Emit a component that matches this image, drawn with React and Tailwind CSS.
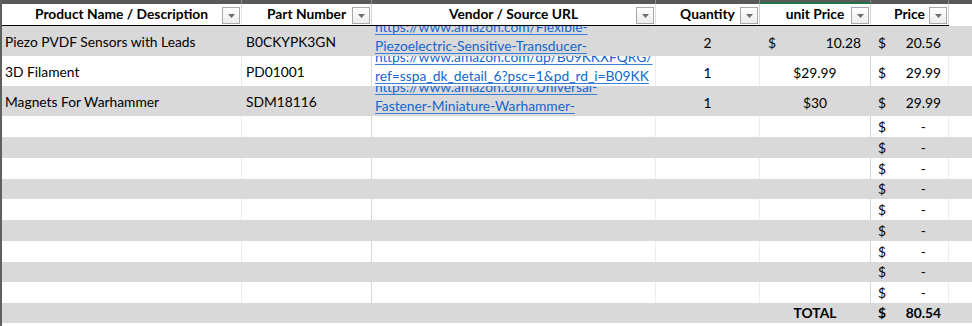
import React from 'react';

const COLS = [240, 130, 284, 104, 111, 78];

const items = [
    {
        name: 'Piezo PVDF Sensors with Leads',
        part: 'B0CKYPK3GN',
        url: ['https://www.amazon.com/Flexible-', 'Piezoelectric-Sensitive-Transducer-'],
        qty: 2,
        unit: { acct: '10.28' },
        price: '20.56',
    },
    {
        name: '3D Filament',
        part: 'PD01001',
        url: ['https://www.amazon.com/dp/B09KKXFQRG/', 'ref=sspa_dk_detail_6?psc=1&pd_rd_i=B09KK'],
        qty: 1,
        unit: { text: '$29.99' },
        price: '29.99',
    },
    {
        name: 'Magnets For Warhammer',
        part: 'SDM18116',
        url: ['https://www.amazon.com/Universal-', 'Fastener-Miniature-Warhammer-'],
        qty: 1,
        unit: { text: '$30' },
        price: '29.99',
    },
];

// 9 blank rows, alternating white / grey, heights as in the sheet
const blanks = [21, 21, 21, 20, 21, 21, 21, 20, 21];

const FilterButton = () => (
    <span className="absolute right-[1px] bottom-[1px] w-[18px] h-[17px] border border-[#a9a9a9] bg-gradient-to-b from-white to-[#ececec] flex items-center justify-center">
        <svg width="7" height="4" viewBox="0 0 7 4">
            <path d="M0 0 L7 0 L3.5 4 Z" fill="#6d6d6d" />
        </svg>
    </span>
);

const Header = () => {
    const labels = ['Product Name / Description', 'Part Number', 'Vendor / Source URL', 'Quantity', 'unit Price', 'Price'];
    const seps = ['border-[#e3e3e3]', 'border-[#d4d4d4]', 'border-[#e3e3e3]', 'border-[#d4d4d4]', 'border-[#d4d4d4]', 'border-[#d4d4d4]'];
    return (
        <div className="flex h-[22px] bg-white">
            <div className="flex w-[947px] border-b border-black">
                {labels.map((label, i) => (
                    <div
                        key={label}
                        style={{ width: COLS[i] }}
                        className={`relative shrink-0 border-r ${seps[i]} flex items-end justify-center pb-[3px] font-bold leading-[16px] text-black`}
                    >
                        {label}
                        <FilterButton />
                    </div>
                ))}
            </div>
            <div className="flex-1" />
        </div>
    );
};

const TopBar = () => (
    <div className="flex h-[4px] bg-[#595959]">
        {COLS.map((w, i) => (
            <div
                key={i}
                style={{ width: w }}
                className={`shrink-0 border-r border-[#8a8a8a] ${i === 4 ? 'border-b-2 border-b-[#217346]' : ''}`}
            />
        ))}
    </div>
);

const sepClass = ['border-[#ececec]', 'border-[#d6d6d6]', 'border-[#ececec]', 'border-[#ececec]', 'border-[#d6d6d6]', 'border-[#ececec]'];

const Cell = ({ i, grey, className = '', children }) => (
    <div
        style={{ width: COLS[i] }}
        className={`shrink-0 border-r ${grey ? 'border-[#d9d9d9]' : sepClass[i]} overflow-hidden ${className}`}
    >
        {children}
    </div>
);

const ItemRow = ({ item, grey }) => (
    <div className={`flex h-[30px] ${grey ? 'bg-[#d9d9d9]' : 'bg-white'}`}>
        <Cell i={0} grey={grey} className="flex items-end pl-[3px] pb-[6px]">{item.name}</Cell>
        <Cell i={1} grey={grey} className="flex items-end pl-[4px] pb-[6px]">{item.part}</Cell>
        <Cell i={2} grey={grey} className="flex flex-col justify-end pl-[3px] pb-[1px]">
            {item.url.map((line) => (
                <span key={line} className="block whitespace-nowrap leading-[19px] text-[#1565cf] underline underline-offset-[2px] decoration-[#3b7fd6]">
                    {line}
                </span>
            ))}
        </Cell>
        <Cell i={3} grey={grey} className="flex items-end justify-center pb-[5px]">{item.qty}</Cell>
        <Cell i={4} grey={grey}>
            {item.unit.acct ? (
                <div className="flex h-full items-end justify-between pl-[8px] pr-[9px] pb-[5px]">
                    <span>$</span>
                    <span>{item.unit.acct}</span>
                </div>
            ) : (
                <div className="flex h-full items-end justify-center pb-[5px]">{item.unit.text}</div>
            )}
        </Cell>
        <Cell i={5} grey={grey}>
            <div className="flex h-full items-end justify-between pl-[7px] pr-[7px] pb-[5px]">
                <span>$</span>
                <span>{item.price}</span>
            </div>
        </Cell>
        <div className="flex-1" />
    </div>
);

const BlankRow = ({ h, grey }) => (
    <div style={{ height: h }} className={`flex ${grey ? 'bg-[#d9d9d9]' : 'bg-white'}`}>
        {[0, 1, 2, 3, 4].map((i) => (
            <Cell key={i} i={i} grey={grey} />
        ))}
        <Cell i={5} grey={grey}>
            <div className="flex h-full items-end justify-between pl-[7px] pr-[22px] pb-[2px]">
                <span>$</span>
                <span>-</span>
            </div>
        </Cell>
        <div className="flex-1" />
    </div>
);

const TotalRow = () => (
    <div className="flex h-[20px] bg-[#d9d9d9] font-bold">
        <Cell i={0} grey />
        <Cell i={1} grey />
        <Cell i={2} grey />
        <Cell i={3} grey />
        <Cell i={4} grey className="flex items-end justify-center pb-[2px]">TOTAL</Cell>
        <Cell i={5} grey>
            <div className="flex h-full items-end justify-between pl-[7px] pr-[7px] pb-[2px]">
                <span>$</span>
                <span>80.54</span>
            </div>
        </Cell>
        <div className="flex-1" />
    </div>
);

export default function App() {
    return (
        <div className="w-[972px] h-[326px] overflow-hidden bg-white border-l-2 border-[#5f5f5f] font-['Lato',sans-serif] text-[13.8px] leading-[17px] text-black">
            <TopBar />
            <Header />
            {items.map((item, idx) => (
                <ItemRow key={item.part} item={item} grey={idx % 2 === 0} />
            ))}
            {blanks.map((h, idx) => (
                <BlankRow key={idx} h={h} grey={idx % 2 === 1} />
            ))}
            <TotalRow />
        </div>
    );
}
